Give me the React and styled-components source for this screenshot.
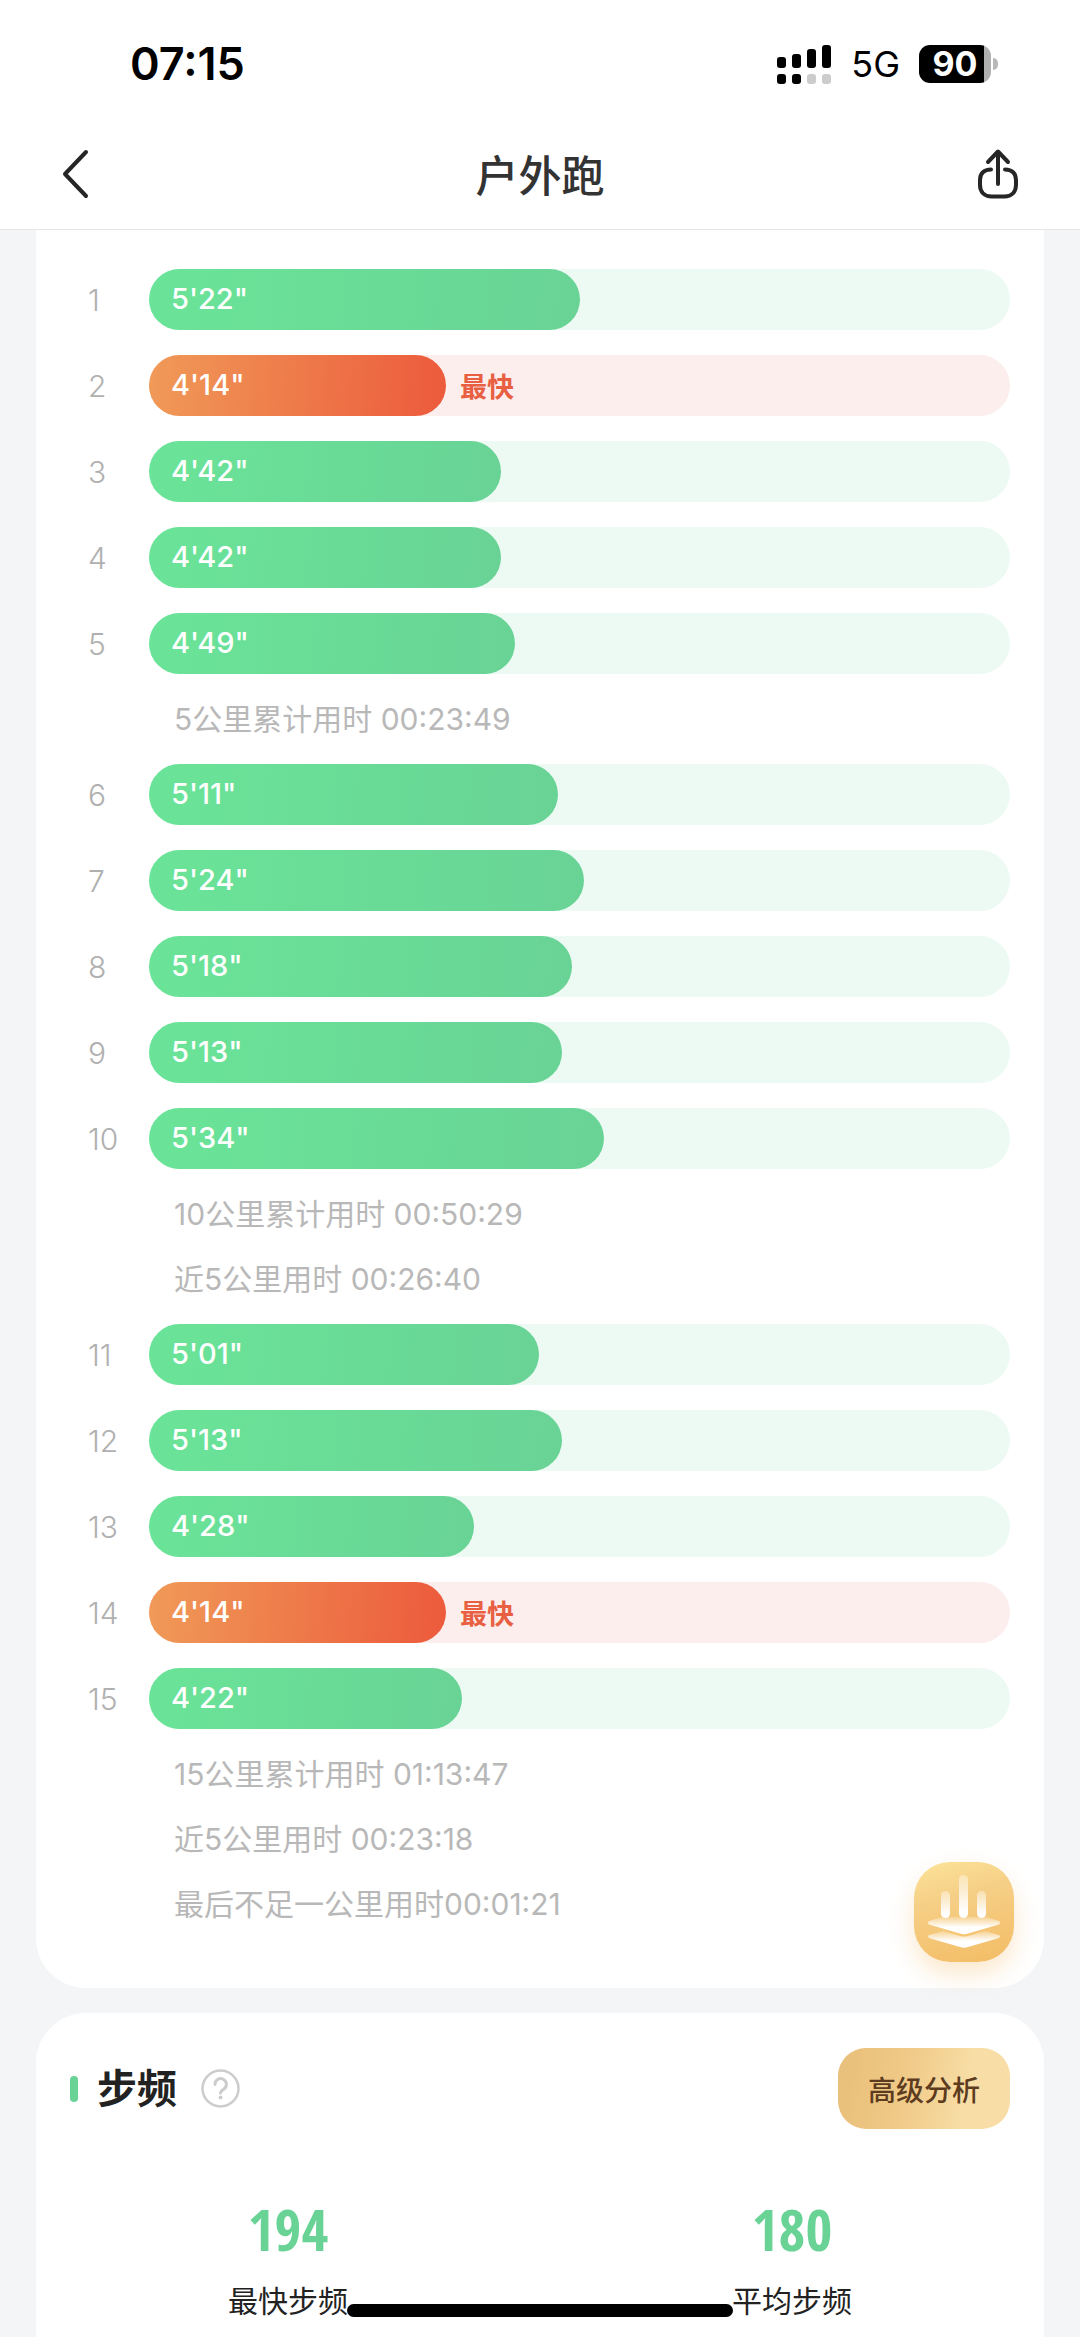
import React from "react";
import styled, { createGlobalStyle } from "styled-components";

const GlobalStyle = createGlobalStyle`
  * { box-sizing: border-box; }
  body {
    margin: 0;
    background: #f3f5f7;
    font-family: Inter, "Noto Sans CJK SC", sans-serif;
    color: #222;
  }
  button { font-family: inherit; border: 0; padding: 0; background: none; cursor: pointer; }
  h1, h2, p, ol, dl, dd { margin: 0; padding: 0; }
`;

const Page = styled.div`
  min-height: 100vh;
  display: flex;
  flex-direction: column;
`;

const TopBar = styled.header`
  background: #fff;
  border-bottom: 1px solid #e4e5e6;
`;

const StatusBar = styled.div`
  display: flex;
  align-items: center;
  justify-content: space-between;
  height: 128px;
  padding: 0 82px 0 130px;
  color: #000;
`;

const Clock = styled.time`
  font-size: 45px;
  font-weight: 600;
  line-height: 48px;
`;

const StatusIcons = styled.div`
  display: flex;
  align-items: center;
  gap: 19px;
`;

const Network = styled.span`
  font-size: 36px;
  font-weight: 400;
  line-height: 40px;
`;

const Battery = styled.div`
  display: flex;
  align-items: center;
  gap: 2px;
`;

const BatteryBody = styled.div`
  width: 72px;
  height: 38px;
  border-radius: 11px;
  background: linear-gradient(90deg, #000 90%, #b0b0b0 90%);
  color: #fff;
  font-size: 34px;
  font-weight: 700;
  line-height: 38px;
  text-align: center;
`;

const BatteryTip = styled.div`
  width: 5px;
  height: 12px;
  border-radius: 0 6px 6px 0;
  background: #b8b8b8;
`;

const NavBar = styled.nav`
  display: grid;
  grid-template-columns: 1fr auto 1fr;
  align-items: center;
  height: 101px;
  padding: 0 58px 6px;
`;

const NavTitle = styled.h1`
  font-size: 43px;
  font-weight: 500;
  line-height: 64px;
  color: #333;
`;

const IconButton = styled.button`
  display: flex;
  justify-self: ${(p) => p.$side};
`;

const Content = styled.main`
  flex: 1;
  display: flex;
  flex-direction: column;
  gap: 25px;
  padding: 0 36px;
`;

const PaceCard = styled.section`
  padding: 39px 34px 64px;
  border-radius: 0 0 50px 50px;
  background: #fff;
`;

const PaceList = styled.ol`
  display: flex;
  flex-direction: column;
  gap: 25px;
  list-style: none;
`;

const PaceRow = styled.li`
  display: flex;
  align-items: center;
  height: 61px;
`;

const Index = styled.span`
  width: 79px;
  padding-left: 18px;
  font-size: 30px;
  font-weight: 300;
  line-height: 60px;
  color: #b0b0b0;
`;

const Track = styled.div`
  flex: 1;
  display: flex;
  align-items: center;
  gap: 14px;
  height: 61px;
  border-radius: 31px;
  background: ${(p) => (p.$fast ? "#fbeeed" : "#ecfaf3")};
`;

const Fill = styled.div`
  height: 61px;
  padding-left: 22px;
  border-radius: 31px;
  background: ${(p) =>
    p.$fast
      ? "linear-gradient(95deg, #f09a58, #ec5a3c)"
      : "linear-gradient(95deg, #6ae498, #69d396)"};
  color: #fff;
  font-size: 29px;
  font-weight: 500;
  line-height: 60px;
`;

const FastTag = styled.span`
  font-size: 27px;
  font-weight: 700;
  color: #e85f42;
`;

const Note = styled.li`
  padding-left: 104px;
  font-size: 30px;
  font-weight: 400;
  line-height: 40px;
  color: #b8b8b8;
`;

const CadenceCard = styled.section`
  flex: 1;
  padding-top: 35px;
  border-radius: 50px 50px 0 0;
  background: #fff;
`;

const CardHeader = styled.div`
  display: flex;
  align-items: center;
  padding: 0 34px;
`;

const Marker = styled.span`
  width: 8px;
  height: 26px;
  border-radius: 4px;
  background: #69d396;
`;

const CardTitle = styled.h2`
  margin: 0 24px 0 19px;
  font-size: 40px;
  font-weight: 700;
  line-height: 56px;
`;

const HelpButton = styled.button`
  display: flex;
`;

const AnalysisButton = styled.button`
  height: 81px;
  margin-left: auto;
  padding: 0 30px;
  border-radius: 28px;
  background: linear-gradient(100deg, #eac17c 10%, #f0ca88 40%, #f8dea6 75%);
  color: #5c3b1e;
  font-size: 28px;
  font-weight: 500;
`;

const Stats = styled.dl`
  display: grid;
  grid-template-columns: 1fr 1fr;
  margin-top: 64px;
  text-align: center;
`;

const Stat = styled.div`
  display: flex;
  flex-direction: column-reverse;
  gap: 14px;
`;

const StatLabel = styled.dt`
  font-size: 30px;
  line-height: 44px;
`;

const StatValue = styled.dd`
  font-family: "Noto Sans ExtraCondensed", "Open Sans Condensed", "Roboto Condensed", Roboto, sans-serif;
  font-size: 58px;
  font-weight: 700;
  line-height: 72px;
  color: #69d396;
`;

const FloatingButton = styled.button`
  position: fixed;
  right: 66px;
  bottom: 375px;
  width: 100px;
  height: 100px;
  border-radius: 36px;
  background: linear-gradient(165deg, #fbe498 0%, #f6cf87 35%, #f3bc64 100%);
  box-shadow: 0 12px 24px rgba(243, 178, 90, 0.3);
`;

const HomeIndicator = styled.div`
  position: fixed;
  left: 50%;
  bottom: 20px;
  width: 386px;
  height: 13px;
  margin-left: -193px;
  border-radius: 7px;
  background: #000;
`;

const entries = [
  { km: 1, pace: "5'22\"" },
  { km: 2, pace: "4'14\"", fast: true },
  { km: 3, pace: "4'42\"" },
  { km: 4, pace: "4'42\"" },
  { km: 5, pace: "4'49\"" },
  { note: "5公里累计用时 00:23:49" },
  { km: 6, pace: "5'11\"" },
  { km: 7, pace: "5'24\"" },
  { km: 8, pace: "5'18\"" },
  { km: 9, pace: "5'13\"" },
  { km: 10, pace: "5'34\"" },
  { note: "10公里累计用时 00:50:29" },
  { note: "近5公里用时 00:26:40" },
  { km: 11, pace: "5'01\"" },
  { km: 12, pace: "5'13\"" },
  { km: 13, pace: "4'28\"" },
  { km: 14, pace: "4'14\"", fast: true },
  { km: 15, pace: "4'22\"" },
  { note: "15公里累计用时 01:13:47" },
  { note: "近5公里用时 00:23:18" },
  { note: "最后不足一公里用时00:01:21" },
];

const FASTEST = 254;

function barWidth(pace) {
  const [minutes, seconds] = pace.split("'");
  const total = Number(minutes) * 60 + parseInt(seconds, 10);
  return `${34.5 + (total - FASTEST) * 0.2288}%`;
}

function SignalIcon() {
  const bars = [
    [0, 12, 11],
    [15, 9, 14],
    [30, 4, 19],
    [45, 0, 23],
  ];
  return (
    <svg width="55" height="39" viewBox="0 0 55 39" aria-hidden="true">
      {bars.map(([x, y, h], i) => (
        <g key={x}>
          <rect x={x} y={y} width="9" height={h} rx="3" />
          <rect x={x} y="29" width="9" height="10" rx="3" fill={i < 2 ? "#000" : "#ccc"} />
        </g>
      ))}
    </svg>
  );
}

function BackIcon() {
  return (
    <svg width="40" height="56" viewBox="0 0 40 56" fill="none" stroke="#262626" strokeWidth="4" strokeLinecap="round" strokeLinejoin="round">
      <path d="M28 4 7 26l21 22" />
    </svg>
  );
}

function ShareIcon() {
  return (
    <svg width="44" height="56" viewBox="0 0 44 56" fill="none" stroke="#262626" strokeWidth="4" strokeLinecap="round" strokeLinejoin="round">
      <path d="M20 36V4M10 14 20 3.500l10 10.500" />
      <path d="M13 21.500C5.500 21.500 2 26 2 32v5c0 7 4.500 11.500 11.500 11.500h13c7 0 11.500-4.500 11.500-11.500v-5c0-6-3.500-10.500-11-10.500" />
    </svg>
  );
}

function HelpIcon() {
  return (
    <svg width="39" height="39" viewBox="0 0 39 39" fill="none" stroke="#ccc" strokeLinecap="round" strokeLinejoin="round">
      <circle cx="19.500" cy="19.500" r="18" strokeWidth="2.500" />
      <path d="M14 15.500a5.700 5.700 0 1 1 9 4.500c-2.500 1.700-3.500 2.300-3.500 4" strokeWidth="3" />
      <circle cx="19.500" cy="28.500" r="1.900" fill="#ccc" stroke="none" />
    </svg>
  );
}

function LayersIcon() {
  return (
    <svg width="100" height="100" viewBox="0 0 100 100" aria-hidden="true">
      <defs>
        <linearGradient id="column" x1="0" y1="0" x2="0" y2="1">
          <stop offset="0" stopColor="#fff" stopOpacity="0.350" />
          <stop offset="0.850" stopColor="#fff" />
        </linearGradient>
        <linearGradient id="layer" x1="0" y1="0" x2="0" y2="1">
          <stop offset="0" stopColor="#fff" stopOpacity="0.200" />
          <stop offset="0.600" stopColor="#fff" />
        </linearGradient>
      </defs>
      <g fill="url(#layer)">
        <path d="M15 73q-2 1 0 3l31 9q4 1.500 8 0l31-9q2-2 0-3l-14-4-17 5q-4 1-8 0l-17-5z" />
        <path d="M15 59q-2 1.500 0 3.500l31 9q4 1.500 8 0l31-9q2-2 0-3.500l-13-4H28z" />
      </g>
      <g fill="url(#column)">
        <rect x="27" y="29" width="9" height="27" rx="4.500" />
        <rect x="45" y="13" width="9" height="43" rx="4.500" />
        <rect x="63" y="29" width="9" height="27" rx="4.500" />
      </g>
    </svg>
  );
}

export default function App() {
  return (
    <Page>
      <GlobalStyle />
      <TopBar>
        <StatusBar>
          <Clock>07:15</Clock>
          <StatusIcons>
            <SignalIcon />
            <Network>5G</Network>
            <Battery>
              <BatteryBody>90</BatteryBody>
              <BatteryTip />
            </Battery>
          </StatusIcons>
        </StatusBar>
        <NavBar>
          <IconButton $side="start" aria-label="返回">
            <BackIcon />
          </IconButton>
          <NavTitle>户外跑</NavTitle>
          <IconButton $side="end" aria-label="分享">
            <ShareIcon />
          </IconButton>
        </NavBar>
      </TopBar>

      <Content>
        <PaceCard>
          <PaceList>
            {entries.map((entry) =>
              entry.note ? (
                <Note key={entry.note}>{entry.note}</Note>
              ) : (
                <PaceRow key={entry.km}>
                  <Index>{entry.km}</Index>
                  <Track $fast={entry.fast}>
                    <Fill $fast={entry.fast} style={{ width: barWidth(entry.pace) }}>
                      {entry.pace}
                    </Fill>
                    {entry.fast && <FastTag>最快</FastTag>}
                  </Track>
                </PaceRow>
              )
            )}
          </PaceList>
        </PaceCard>

        <CadenceCard>
          <CardHeader>
            <Marker />
            <CardTitle>步频</CardTitle>
            <HelpButton aria-label="说明">
              <HelpIcon />
            </HelpButton>
            <AnalysisButton>高级分析</AnalysisButton>
          </CardHeader>
          <Stats>
            <Stat>
              <StatLabel>最快步频</StatLabel>
              <StatValue>194</StatValue>
            </Stat>
            <Stat>
              <StatLabel>平均步频</StatLabel>
              <StatValue>180</StatValue>
            </Stat>
          </Stats>
        </CadenceCard>
      </Content>

      <FloatingButton aria-label="数据分析">
        <LayersIcon />
      </FloatingButton>
      <HomeIndicator />
    </Page>
  );
}
